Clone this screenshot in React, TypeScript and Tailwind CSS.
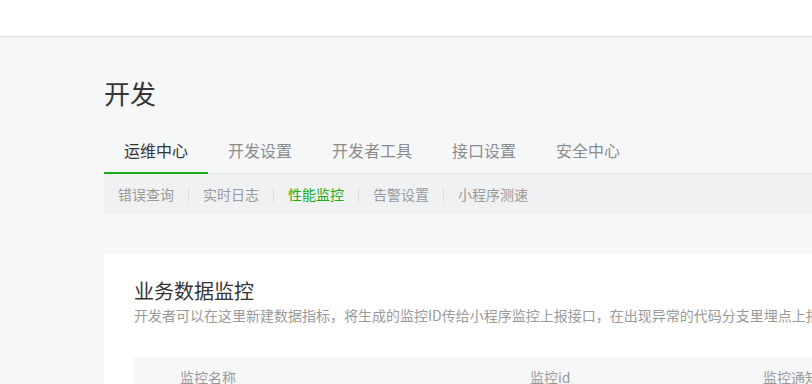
import React from "react";

const font = { fontFamily: '"Noto Sans CJK SC", "Noto Sans", sans-serif' };

export default function App() {
  const tabs = ["运维中心", "开发设置", "开发者工具", "接口设置", "安全中心"];
  const subs = ["错误查询", "实时日志", "性能监控", "告警设置", "小程序测速"];
  return (
    <div className="w-[812px] h-[384px] overflow-hidden bg-[#f6f7f9]" style={font}>
      <div className="h-[37px] bg-white border-b border-[#e2e2e2] shadow-[0_1px_2px_rgba(0,0,0,0.04)]" />
      <div className="ml-[104px] w-[1000px]">
        <h1 className="mt-[38px] text-[26px] leading-[36px] text-[#353535] font-normal">开发</h1>
        <div className="mt-[20px] flex border-b border-[#e5e6e8] h-[43px]">
          {tabs.map((t, i) => (
            <div
              key={t}
              className={
                i === 0
                  ? "px-5 h-[43px] text-[16px] leading-[38px] text-[#353535] border-b-[2px] border-[#1aad19]"
                  : "px-5 text-[16px] leading-[38px] text-[#8c8c8c]"
              }
            >
              {t}
            </div>
          ))}
        </div>
        <div className="h-10 bg-[#f0f1f3] flex items-center">
          {subs.map((s, i) => (
            <React.Fragment key={s}>
              {i > 0 && <div className="w-px h-[15px] bg-[#dcdcdc]" />}
              <div className={"px-[14px] text-[14px] leading-5 " + (i === 2 ? "text-[#1aad19]" : "text-[#9a9a9a]")}>{s}</div>
            </React.Fragment>
          ))}
        </div>
        <div className="mt-10 bg-white rounded-[4px] pl-[30px] pt-[23px] h-[200px]">
          <div className="text-[20px] leading-[28px] text-[#353535]">业务数据监控</div>
          <div className="text-[14px] leading-5 text-[#9a9a9a] whitespace-nowrap">
            开发者可以在这里新建数据指标，将生成的监控ID传给小程序监控上报接口，在出现异常的代码分支里埋点上报
          </div>
          <div className="mt-[32px] bg-[#f6f7f9] h-[40px] flex items-center text-[14px] text-[#9a9a9a]">
            <div className="pl-[46px] w-[396px]">监控名称</div>
            <div className="w-[233px]">监控id</div>
            <div>监控通知</div>
          </div>
        </div>
      </div>
    </div>
  );
}
